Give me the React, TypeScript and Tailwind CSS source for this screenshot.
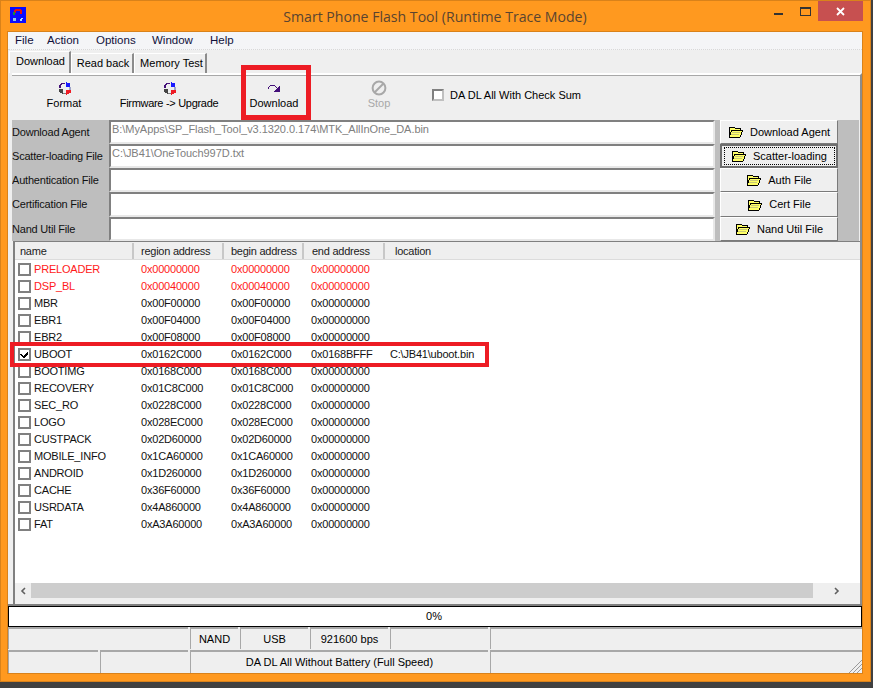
import React from "react";

const rows: [string, string, string, string, string?, boolean?, boolean?][] = [
  ["PRELOADER", "0x00000000", "0x00000000", "0x00000000", "", false, true],
  ["DSP_BL", "0x00040000", "0x00040000", "0x00000000", "", false, true],
  ["MBR", "0x00F00000", "0x00F00000", "0x00000000"],
  ["EBR1", "0x00F04000", "0x00F04000", "0x00000000"],
  ["EBR2", "0x00F08000", "0x00F08000", "0x00000000"],
  ["UBOOT", "0x0162C000", "0x0162C000", "0x0168BFFF", "C:\\JB41\\uboot.bin", true],
  ["BOOTIMG", "0x0168C000", "0x0168C000", "0x00000000"],
  ["RECOVERY", "0x01C8C000", "0x01C8C000", "0x00000000"],
  ["SEC_RO", "0x0228C000", "0x0228C000", "0x00000000"],
  ["LOGO", "0x028EC000", "0x028EC000", "0x00000000"],
  ["CUSTPACK", "0x02D60000", "0x02D60000", "0x00000000"],
  ["MOBILE_INFO", "0x1CA60000", "0x1CA60000", "0x00000000"],
  ["ANDROID", "0x1D260000", "0x1D260000", "0x00000000"],
  ["CACHE", "0x36F60000", "0x36F60000", "0x00000000"],
  ["USRDATA", "0x4A860000", "0x4A860000", "0x00000000"],
  ["FAT", "0xA3A60000", "0xA3A60000", "0x00000000"],
];

const files: [string, string, string, string][] = [
  ["Download Agent", "B:\\MyApps\\SP_Flash_Tool_v3.1320.0.174\\MTK_AllInOne_DA.bin", "Download Agent", "h-[24px]"],
  ["Scatter-loading File", "C:\\JB41\\OneTouch997D.txt", "Scatter-loading", "h-[24px]"],
  ["Authentication File", "", "Auth File", "h-[24px]"],
  ["Certification File", "", "Cert File", "h-[25px]"],
  ["Nand Util File", "", "Nand Util File", "h-[24px]"],
];

function Folder() {
  return (
    <svg width="16" height="12" viewBox="0 0 16 12" shapeRendering="crispEdges" className="shrink-0">
      <path d="M1 1h5l1 1h5v2h3l-3 7H1z" fill="#ffff66" stroke="#000" strokeWidth="1" />
      <path d="M1 11l3-7h11" fill="none" stroke="#000" strokeWidth="1" />
      <path d="M4 6h8v1h-8zM3 8h8v1h-8z" fill="#c8c878" />
    </svg>
  );
}

function Sync() {
  return (
    <svg width="13" height="13" viewBox="0 0 13 13" shapeRendering="crispEdges">
      <path d="M2 2h1V1h4v1H4v1H3v3H1V3h1z" fill="#44107a" />
      <path d="M8 0h1v1h3v4H8z" fill="#1a1aff" />
      <path d="M11 5h2v3h-2z" fill="#a0a4c8" />
      <path d="M13 8v3h-2v1H9v1H8V8z" fill="#ee1c25" />
      <path d="M1 7h4v5H4v-1H2v-1H1z" fill="#444444" />
      <path d="M5 11h3v1H5z" fill="#808080" />
    </svg>
  );
}

function Tool({ label, w, disabled, icon, tight }: { label: string; w: string; disabled?: boolean; icon: React.ReactNode; tight?: boolean }) {
  return (
    <div className={`${w} flex flex-col items-center pt-[4px] whitespace-nowrap`}>
      <div className="h-[16px] flex items-center justify-center">{icon}</div>
      <div className={`leading-[14px] ${tight ? "tracking-[-0.3px]" : ""} ${disabled ? "text-[#a8a8a8]" : "text-black"}`}>{label}</div>
    </div>
  );
}

function Check({ checked }: { checked?: boolean }) {
  return (
    <div className="w-[13px] h-[13px] border-2 border-[#808080] bg-white flex items-center justify-center shrink-0">
      {checked && (
        <svg width="9" height="9" viewBox="0 0 9 9" shapeRendering="crispEdges">
          <path d="M0 4h2v1h1v1h1V5h1V4h1V3h1V2h1v2H8v1H7v1H6v1H5v1H3V7H2V6H1V5H0z" fill="#000" />
        </svg>
      )}
    </div>
  );
}

export default function App() {
  return (
    <div
      className="relative w-[873px] h-[688px] bg-[#404040] overflow-hidden text-[11px] text-black"
      style={{ fontFamily: '"Liberation Sans", Arial, sans-serif' }}
    >
      <div className="relative w-[871px] h-[682px] bg-[#ff991f] border border-[#d9821a] flex flex-col pl-[6px] pr-[7px]">
        {/* title bar */}
        <div className="relative h-[30px] shrink-0 flex items-center justify-center">
          <div
            className="text-[14.1px] text-[#5a4430] pt-[1px]"
            style={{ fontFamily: '"Open Sans", sans-serif' }}
          >
            Smart Phone Flash Tool (Runtime Trace Mode)
          </div>
          <div className="absolute left-[3px] top-[6px] w-[16px] h-[16px] bg-[#0a0aff]">
            <svg width="16" height="16" viewBox="0 0 16 16" shapeRendering="crispEdges">
              <path d="M5 2h6v1h1v4h-2V4H6v2H4V3h1z" fill="#e01010" />
              <path d="M3 5h2v3H3z" fill="#109040" />
              <path d="M3 11h3v3H3z" fill="#8fc8e8" />
              <path d="M11 11h2v1h-1v2h-2v-2h1z" fill="#b0e0f8" />
            </svg>
          </div>
          <div className="absolute left-[767px] top-[12px] w-[9px] h-[2px] bg-[#333333]" />
          <div className="absolute left-[793px] top-[6px] w-[11px] h-[9px] border border-[#333333] border-t-2" />
          <div className="absolute left-[811px] top-[0px] w-[45px] h-[20px] bg-[#c75050] flex items-center justify-center">
            <svg width="9" height="9" viewBox="0 0 9 9">
              <path d="M1 1l7 7M8 1l-7 7" stroke="#fff" strokeWidth="1.8" />
            </svg>
          </div>
        </div>

        {/* client */}
        <div className="h-[643px] shrink-0 flex flex-col bg-[#efefef] border border-[#d9821a]">
          <div className="h-[18px] shrink-0 bg-[#f4f5f7] border-b border-dotted border-[#d8d8d8] flex items-center pl-[7px] text-[#10103a] text-[11.5px]">
            <span className="w-[32px]">File</span>
            <span className="w-[49px]">Action</span>
            <span className="w-[56px]">Options</span>
            <span className="w-[58px]">Window</span>
            <span>Help</span>
          </div>

          {/* tabs */}
          <div className="h-[23px] shrink-0 flex items-end pl-[1px] whitespace-nowrap">
            <div className="w-[62px] h-[22px] bg-[#efefef] border-t border-l border-t-white border-l-white border-r-2 border-r-[#8c8c8c] flex items-center justify-center pb-[3px] pl-[2px]">
              Download
            </div>
            <div className="w-[63px] h-[20px] border-t border-l border-t-white border-l-white border-r-2 border-r-[#8c8c8c] flex items-center justify-center pl-[2px]">
              Read back
            </div>
            <div className="w-[73px] h-[20px] border-t border-l border-t-white border-l-white border-r-2 border-r-[#8c8c8c] flex items-center justify-center pl-[3px]">
              Memory Test
            </div>
          </div>

          {/* panel */}
          <div className="h-[531px] shrink-0 flex flex-col ml-[4px] border-t-2 border-t-white border-r-2 border-r-[#8c8c8c]">
            <div className="border-t border-[#a8a8a8] h-[45px] shrink-0 flex items-start">
              <Tool label="Format" w="w-[104px]" icon={<Sync />} />
              <Tool label="Firmware -> Upgrade" w="w-[106px]" icon={<Sync />} tight />
              <Tool
                label="Download"
                w="w-[104px]"
                icon={
                  <svg width="14" height="10" viewBox="0 0 14 10" shapeRendering="crispEdges">
                    <path d="M1 6V4h1V3h1V2h5v1h1v1h1v1H9V4H8V3H3v1H2v2z" fill="#44107a" />
                    <path d="M13 3v6H7v-1h1V7h1V6h1V5h1V4h1V3z" fill="#44107a" />
                  </svg>
                }
              />
              <Tool
                label="Stop"
                w="w-[106px]"
                disabled
                icon={
                  <svg width="16" height="16" viewBox="0 0 16 16">
                    <circle cx="8" cy="8" r="6.4" fill="none" stroke="#a8a8a8" strokeWidth="2" />
                    <path d="M3.5 12.5l9-9" stroke="#a8a8a8" strokeWidth="2" />
                  </svg>
                }
              />
              <div className="flex items-center gap-[6px] mt-[11px] whitespace-nowrap">
                <div className="w-[12px] h-[12px] bg-white border-2 border-[#808080] border-r-[#c0c0c0] border-b-[#c0c0c0]" />
                <span>DA DL All With Check Sum</span>
              </div>
            </div>

            {/* file rows */}
            <div className="shrink-0 bg-[#bebebe] flex flex-col mr-[1px]">
              {files.map(([label, value, btn, h], i) => (
                <div key={label} className={`flex ${h}`}>
                  <div className="w-[97px] shrink-0 flex items-center text-[#111] whitespace-nowrap overflow-hidden tracking-[-0.2px]">{label}</div>
                  <div className="w-[606px] shrink-0 bg-white border-2 border-[#808080] border-r-[#e8e8e8] border-b-[#e8e8e8] flex items-start pl-[1px] text-[#808080] overflow-hidden whitespace-nowrap leading-[14px] tracking-[-0.05px]">
                    {value}
                  </div>
                  <div
                    className={`ml-[5px] w-[118px] shrink-0 bg-[#efefef] flex items-center justify-center gap-[6px] whitespace-nowrap ${
                      i === 1
                        ? "border-2 border-[#6e6e6e]"
                        : "border border-white border-r-[#7a7a7a] border-b-[#7a7a7a]"
                    }`}
                  >
                    <div
                      className={`flex items-center justify-center gap-[6px] ${
                        i === 1 ? "w-[111px] h-[18px] border border-dotted border-black" : ""
                      }`}
                    >
                      <Folder />
                      <span>{btn}</span>
                    </div>
                  </div>
                </div>
              ))}
            </div>

            {/* list */}
            <div className="flex-1 bg-white border-l-2 border-t border-l-[#808080] border-t-[#808080] ml-[1px] flex flex-col min-h-0">
              <div className="h-[18px] shrink-0 bg-[#efefef] flex text-[#222] border-b border-[#dcdcdc] whitespace-nowrap tracking-[-0.25px] pt-[1px]">
                <div className="w-[119px] pl-[5px] border-r-2 border-r-[#c8c8c8] flex items-center">name</div>
                <div className="w-[90px] pl-[7px] border-r-2 border-r-[#c8c8c8] flex items-center">region address</div>
                <div className="w-[80px] pl-[7px] border-r-2 border-r-[#c8c8c8] flex items-center">begin address</div>
                <div className="w-[81px] pl-[8px] border-r-2 border-r-[#c8c8c8] flex items-center">end address</div>
                <div className="flex-1 pl-[10px] flex items-center">location</div>
              </div>
              <div className="flex-1 pt-[1px] tracking-[-0.2px]">
                {rows.map(([name, a, b, c, loc, on, red]) => (
                  <div key={name} className={`h-[17px] flex items-center whitespace-nowrap ${red ? "text-[#ff1a1a]" : "text-[#111]"}`}>
                    <div className="w-[120px] pl-[3px] flex items-center gap-[3px]">
                      <Check checked={on} />
                      <span>{name}</span>
                    </div>
                    <div className="w-[90px] pl-[6px]">{a}</div>
                    <div className="w-[80px] pl-[6px]">{b}</div>
                    <div className="w-[80px] pl-[6px]">{c}</div>
                    <div className="pl-[5px]">{loc}</div>
                  </div>
                ))}
              </div>
              <div className="h-[15px] shrink-0 flex items-center bg-[#efefef]">
                <div className="w-[16px] flex items-center justify-center text-[#555]">
                  <svg width="6" height="8" viewBox="0 0 6 8">
                    <path d="M5 1L2 4l3 3" fill="none" stroke="#606060" strokeWidth="1.6" />
                  </svg>
                </div>
                <div className="w-[782px] h-[15px] bg-[#cdcdcd]" />
                <div className="flex-1 flex items-center justify-center">
                  <svg width="6" height="8" viewBox="0 0 6 8">
                    <path d="M1 1l3 3-3 3" fill="none" stroke="#606060" strokeWidth="1.6" />
                  </svg>
                </div>
              </div>
              <div className="h-[6px] shrink-0 bg-[#efefef]" />
            </div>
          </div>

          {/* progress */}
          <div className="h-[2px] shrink-0 bg-[#808080]" />
          <div className="h-[21px] shrink-0 bg-white border border-black flex items-center justify-center pr-[2px]">0%</div>

          {/* status */}
          <div className="flex h-[22px] shrink-0 gap-[2px] whitespace-nowrap">
            <div className="w-[180px] border-t-2 border-l border-[#a8a8a8] border-r-0" />
            <div className="w-[48px] border-t-2 border-l border-[#a8a8a8] flex items-center justify-center">NAND</div>
            <div className="w-[68px] border-t-2 border-l border-[#a8a8a8] flex items-center justify-center">USB</div>
            <div className="w-[78px] border-t-2 border-l border-[#a8a8a8] flex items-center justify-center">921600 bps</div>
            <div className="w-[98px] border-t-2 border-l border-[#a8a8a8]" />
            <div className="flex-1 border-t-2 border-l border-[#a8a8a8]" />
          </div>
          <div className="relative flex flex-1 min-h-0 mt-[1px] gap-[2px] whitespace-nowrap">
            <div className="w-[90px] border-t-2 border-l border-[#a8a8a8]" />
            <div className="w-[88px] border-t-2 border-l border-[#a8a8a8]" />
            <div className="w-[298px] border-t-2 border-l border-[#a8a8a8] flex items-center justify-center">
              DA DL All Without Battery (Full Speed)
            </div>
            <div className="flex-1 border-t-2 border-l border-[#a8a8a8]" />
            <svg className="absolute right-0 bottom-0" width="14" height="14" viewBox="0 0 14 14">
              <path d="M14 1L1 14M14 5L5 14M14 9L9 14" stroke="#9a9a9a" strokeWidth="1" />
            </svg>
          </div>
        </div>
      </div>

      {/* annotations */}
      <div className="absolute left-[241px] top-[65px] w-[70px] h-[55px] border-[5px] border-[#ed1c24]" />
      <div className="absolute left-[10px] top-[342px] w-[479px] h-[25px] border-[4px] border-[#ed1c24]" />
    </div>
  );
}
